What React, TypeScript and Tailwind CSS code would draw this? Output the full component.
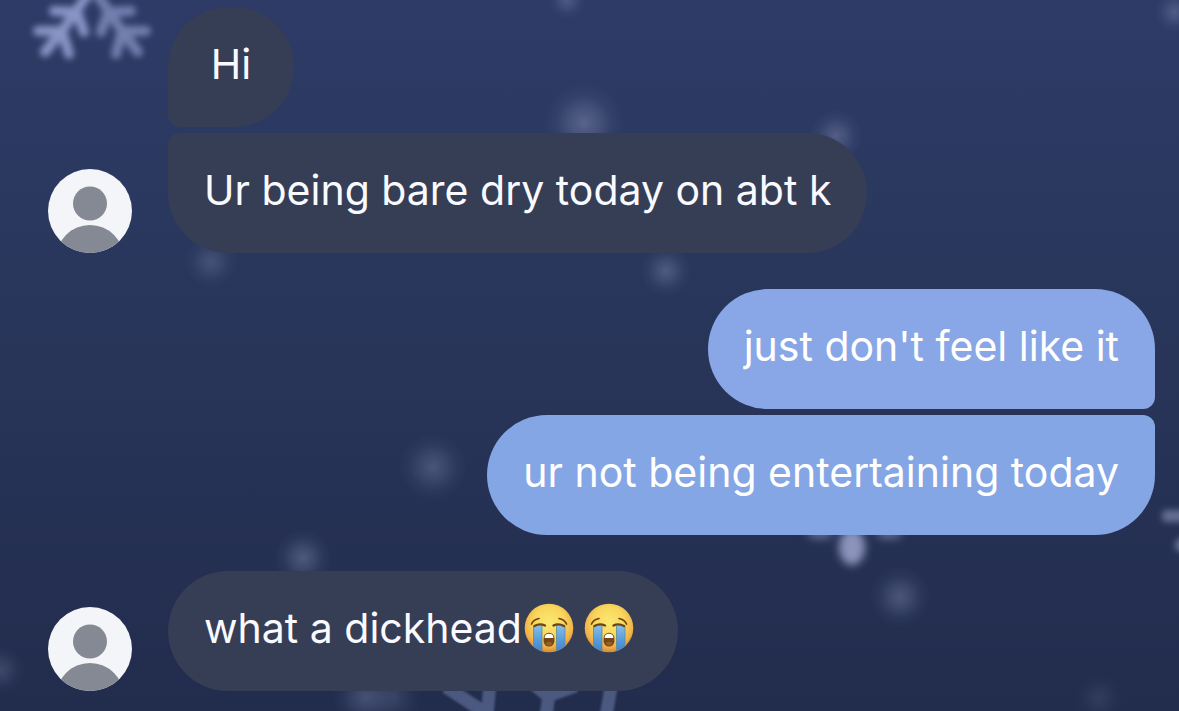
import { useId, type ReactNode } from "react";

function SnowBackdrop() {
  return (
    <svg
      aria-hidden="true"
      className="absolute inset-0 h-full w-full"
      viewBox="0 0 1179 711"
      preserveAspectRatio="xMidYMid slice"
    >
      <defs>
        <filter id="soft" x="-50%" y="-50%" width="200%" height="200%" colorInterpolationFilters="sRGB">
          <feGaussianBlur stdDeviation="3" />
        </filter>
        <filter id="softer" x="-50%" y="-50%" width="200%" height="200%" colorInterpolationFilters="sRGB">
          <feGaussianBlur stdDeviation="4.5" />
        </filter>
        <filter id="crisp" x="-20%" y="-20%" width="140%" height="140%">
          <feGaussianBlur stdDeviation="1" />
        </filter>
        <radialGradient id="flake">
          <stop offset="0" stopColor="#858fb2" stopOpacity="0.62" />
          <stop offset="0.35" stopColor="#7b86aa" stopOpacity="0.42" />
          <stop offset="0.7" stopColor="#7080a8" stopOpacity="0.13" />
          <stop offset="1" stopColor="#7080a8" stopOpacity="0" />
        </radialGradient>
      </defs>
      <g filter="url(#soft)" fill="none" stroke="#8e9acb" strokeLinecap="round" strokeWidth="10">
        <g opacity="0.95">
          <path d="M88 -6 L62 31 L45 52" />
          <path d="M54 11 L77 12 L84 32" />
          <path d="M38 31 L62 31 L69 54" />
        </g>
        <g opacity="0.72">
          <path d="M97 -6 L122 31 L138 52" />
          <path d="M131 11 L108 12 L101 32" />
          <path d="M146 31 L122 31 L116 54" />
        </g>
      </g>
      <g fill="url(#flake)">
        <circle cx="584" cy="123" r="40" opacity="0.8" />
        <circle cx="836" cy="136" r="27" opacity="0.7" />
        <circle cx="567" cy="0" r="19" opacity="0.6" />
        <circle cx="1175" cy="12" r="21" opacity="0.65" />
        <circle cx="211" cy="262" r="27" opacity="0.5" />
        <circle cx="666" cy="271" r="26" opacity="0.65" />
        <circle cx="433" cy="467" r="34" opacity="0.6" />
        <circle cx="303" cy="558" r="29" opacity="0.7" />
        <circle cx="900" cy="597" r="31" opacity="0.65" />
        <circle cx="1099" cy="698" r="25" opacity="0.25" />
        <circle cx="0" cy="670" r="25" opacity="0.45" />
        <ellipse cx="366" cy="697" rx="34" ry="32" opacity="0.6" />
        <ellipse cx="394" cy="697" rx="28" ry="30" opacity="0.35" />
      </g>
      <g filter="url(#softer)" fill="#8d94bb">
        <ellipse cx="852" cy="547" rx="13" ry="18" />
        <ellipse cx="820" cy="534" rx="13" ry="5" opacity="0.6" />
        <ellipse cx="889" cy="534" rx="13" ry="5" opacity="0.6" />
      </g>
      <g filter="url(#soft)" fill="#858db4">
        <rect x="1162" y="510" width="32" height="12" rx="4" opacity="0.65" />
        <circle cx="1182" cy="545" r="7" opacity="0.7" />
      </g>
      <g filter="url(#crisp)" fill="none" stroke="#4b587f" strokeWidth="13">
        <path d="M446 687 L490 716 M490 684 L487 716" />
        <path d="M531 682 L548 696 L576 686 M549 694 L546 716" />
        <path d="M612 682 L606 716" />
      </g>
    </svg>
  );
}

function Avatar() {
  const clip = useId();
  return (
    <svg role="img" aria-label="Profile" viewBox="0 0 84 84" className="size-21 shrink-0">
      <clipPath id={clip}>
        <circle cx="42" cy="42" r="42" />
      </clipPath>
      <g clipPath={`url(#${clip})`}>
        <rect width="84" height="84" fill="#f3f5f8" />
        <circle cx="42" cy="34.5" r="17" fill="#858993" />
        <circle cx="42" cy="90" r="34" fill="#858993" />
      </g>
    </svg>
  );
}

function CryingFace() {
  const id = useId();
  return (
    <svg role="img" aria-label="Loudly crying face" viewBox="0 0 50 50" className="size-12.5 shrink-0">
      <defs>
        <radialGradient id={`${id}f`} cx="0.5" cy="0.38" r="0.64">
          <stop offset="0" stopColor="#fbe873" />
          <stop offset="0.5" stopColor="#f9d65c" />
          <stop offset="0.8" stopColor="#efb048" />
          <stop offset="1" stopColor="#d3812f" />
        </radialGradient>
        <linearGradient id={`${id}t`} x1="0" y1="0" x2="0" y2="1">
          <stop offset="0" stopColor="#88c0e8" />
          <stop offset="0.5" stopColor="#5a9edc" />
          <stop offset="1" stopColor="#3f80c8" />
        </linearGradient>
        <clipPath id={`${id}c`}>
          <circle cx="25" cy="25" r="24.3" />
        </clipPath>
      </defs>
      <circle cx="25" cy="25" r="24.3" fill={`url(#${id}f)`} />
      <g clipPath={`url(#${id}c)`}>
        <path d="M9.5 22 H18 V50 H9.5 Z M32.5 22 H41 V50 H32.5 Z" fill={`url(#${id}t)`} />
        <path d="M9.5 23 V50 M18 23 V50 M32.5 23 V50 M41 23 V50" stroke="#5b8b9c" strokeWidth="0.8" />
      </g>
      <g fill="none" stroke="#71430d" strokeLinecap="round" strokeWidth="1.7">
        <path d="M7.5 21 Q9.5 16.5 15 15.5" />
        <path d="M42.5 21 Q40.5 16.5 35 15.5" />
      </g>
      <g fill="none" stroke="#6b4514" strokeLinecap="round" strokeWidth="2.4">
        <path d="M10.5 23 Q15.5 20 21 22.5" />
        <path d="M40 23 Q34.5 20 29.5 22.5" />
      </g>
      <rect x="19.6" y="29.8" width="10.8" height="13.7" rx="5.3" fill="#774715" />
      <path d="M20.6 35 Q20.6 30.8 25 30.8 Q29.4 30.8 29.4 35 Z" fill="#fff" />
      <path d="M21.6 40 Q25 37.5 28.4 40 Q27.4 42.7 25 42.7 Q22.6 42.7 21.6 40 Z" fill="#986023" />
    </svg>
  );
}

function Bubble({ shape, children }: { shape: string; children: ReactNode }) {
  return (
    <p
      className={`flex min-w-[126px] justify-center px-9 pt-8 pb-[38px] text-[41px] leading-[50px] font-normal ${shape}`}
    >
      {children}
    </p>
  );
}

export default function App() {
  return (
    <main className="relative min-h-screen overflow-hidden bg-linear-to-b from-[#2e3b67] via-[#283559] to-[#222c4d] font-['Inter',sans-serif] text-[#f9faff]">
      <SnowBackdrop />
      <div className="relative flex flex-col gap-9 pt-[7px] pr-6 pb-5 pl-12">
        <section className="flex items-end gap-9">
          <Avatar />
          <div className="flex flex-col items-start gap-1.5">
            <Bubble shape="rounded-[60px] rounded-bl-xl bg-[#363e55]">Hi</Bubble>
            <Bubble shape="rounded-[60px] rounded-tl-xl bg-[#363e55]">Ur being bare dry today on abt k</Bubble>
          </div>
        </section>
        <section className="flex flex-col items-end gap-1.5 text-white">
          <Bubble shape="rounded-[60px] rounded-br-xl bg-[#89a7e6]">just don't feel like it</Bubble>
          <Bubble shape="rounded-[60px] rounded-tr-xl bg-[#85a6e5]">ur not being entertaining today</Bubble>
        </section>
        <section className="flex items-end gap-9">
          <Avatar />
          <Bubble shape="rounded-[60px] bg-[#363e55]">
            <span>what a dickhead</span>
            <span className="ml-0.5 flex gap-2.5 pr-2">
              <CryingFace />
              <CryingFace />
            </span>
          </Bubble>
        </section>
      </div>
    </main>
  );
}
